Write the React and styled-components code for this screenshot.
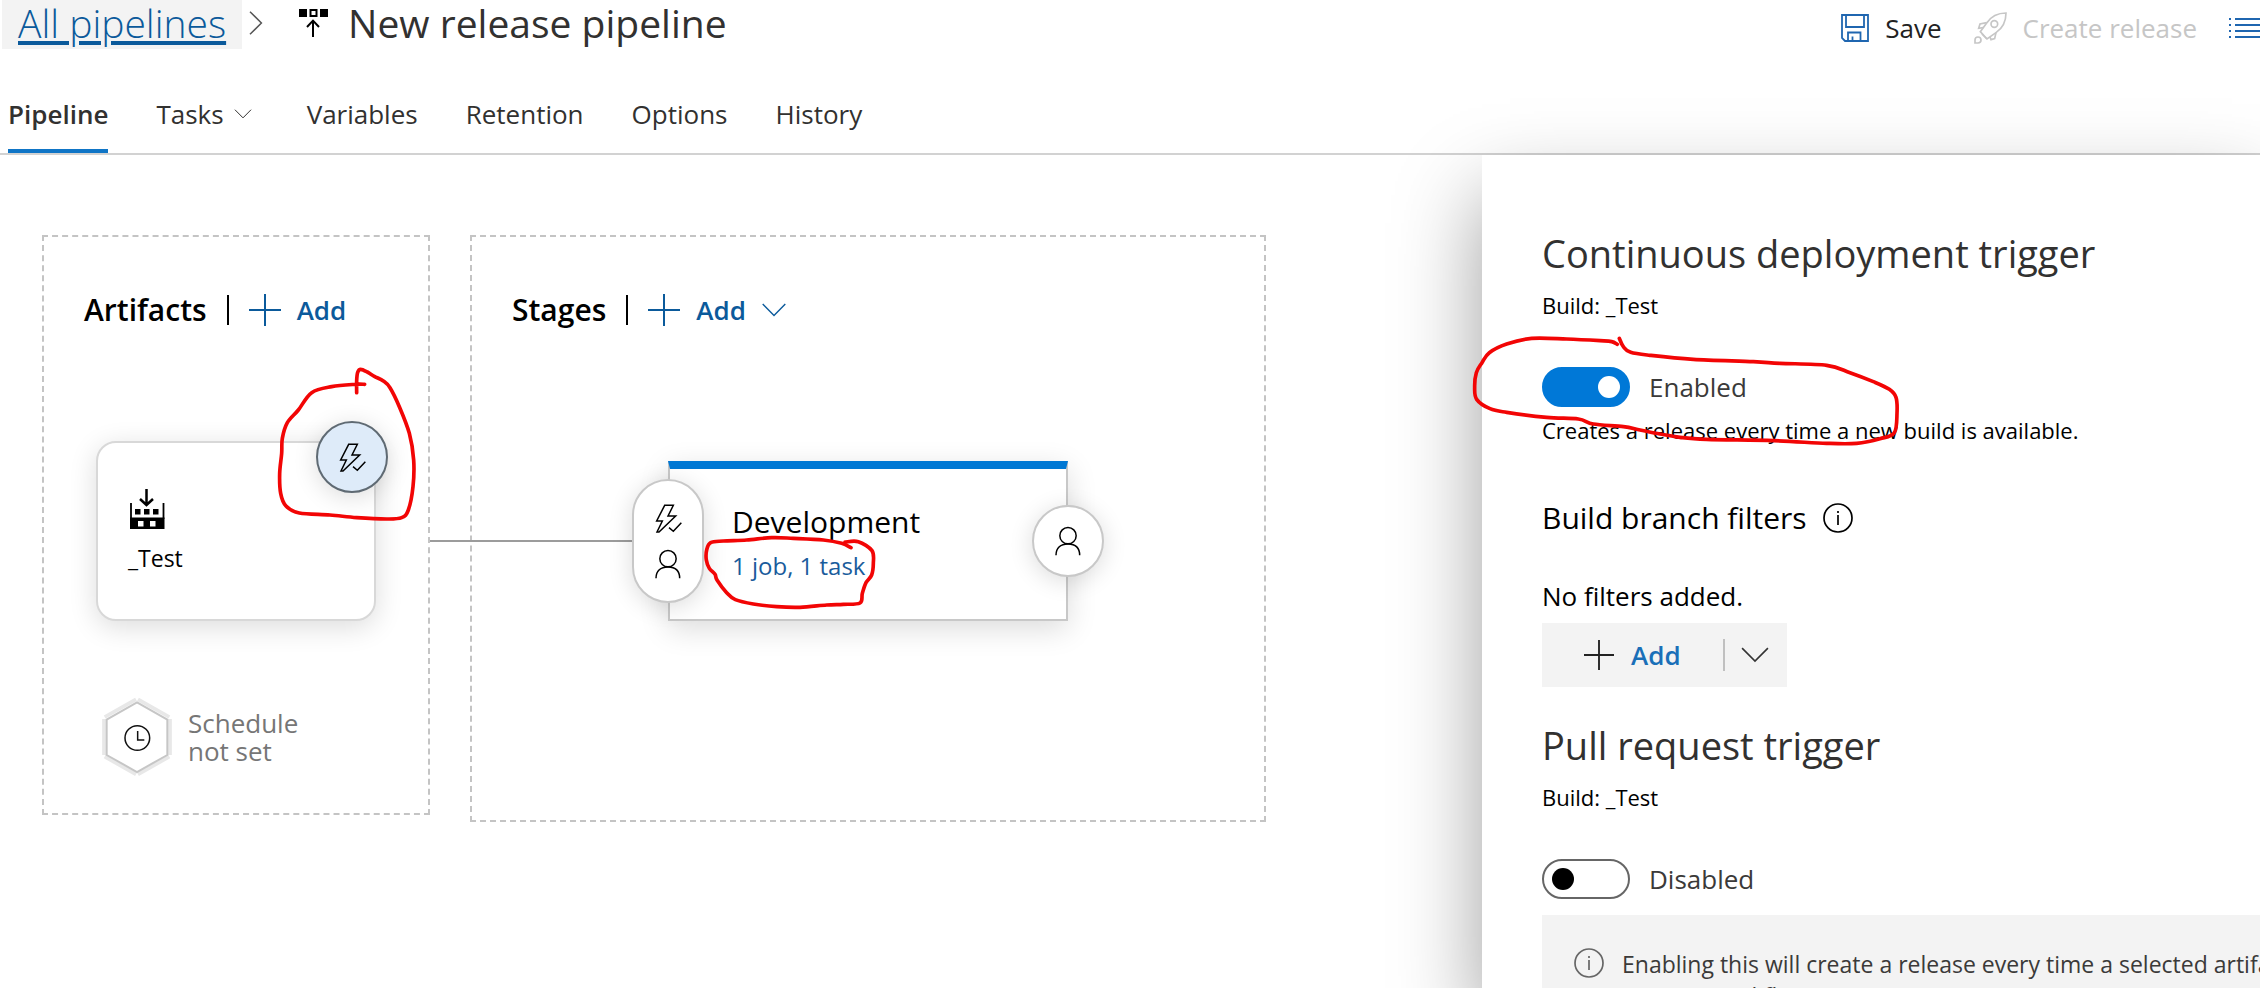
import React from "react";
import styled, { createGlobalStyle, css } from "styled-components";

const GlobalStyle = createGlobalStyle`
  *, *::before, *::after { box-sizing: border-box; }
  body {
    margin: 0;
    background: #fff;
    color: #000;
    font-family: "Open Sans", "Noto Sans", sans-serif;
    font-size: 26px;
  }
  button { font: inherit; border: 0; padding: 0; background: none; cursor: pointer; }
  h1, h2, h3, p { margin: 0; font-weight: 400; }
  svg { display: block; flex: none; }
`;

const LINK = "#0b5a9b";

/* ---------- icons ---------- */

const Stroke = styled.svg`
  fill: none;
  stroke: currentColor;
`;

const PlusIcon = ({ size = 32 }) => (
  <Stroke width={size} height={size} viewBox="0 0 32 32" strokeWidth="2">
    <path d="M16 0v32M0 16h32" />
  </Stroke>
);

const ChevronDown = ({ width = 24, height = 14 }) => (
  <Stroke width={width} height={height} viewBox="0 0 24 14" strokeWidth="1.4">
    <path d="M.7 1L12 12.4 23.3 1" />
  </Stroke>
);

const ChevronRight = () => (
  <Stroke width="14" height="24" viewBox="0 0 14 24" strokeWidth="1.5">
    <path d="M1 .7L12.4 12 1 23.3" />
  </Stroke>
);

const ReleaseIcon = () => (
  <Stroke width="29" height="28" viewBox="0 0 29 28" strokeWidth="2">
    <path fill="currentColor" stroke="none" d="M0 0h8v8H0zM21 0h8v8h-8z" />
    <path d="M11.5 1h6v6h-6zM14 28V12M8 18l6-6.400 6 6.400" />
  </Stroke>
);

const SaveIcon = () => (
  <Stroke width="28" height="28" viewBox="0 0 28 28" strokeWidth="1.8">
    <path d="M1 1h26v26H4l-3-3zM5 1v12h18V1M7 27v-8.500h12.500V27M11.500 27v-4.500" />
  </Stroke>
);

const RocketIcon = () => (
  <Stroke width="33" height="32" viewBox="0 0 99 96" strokeWidth="5">
    <path d="M96 3C72 3 52 12 38 33L19 59l20 22 27-19C88 47 96 27 96 3z" />
    <path d="M38 32L18 36l-4 13 14-2M66 62l-4 18-11 3-3-8M24 66l14 14" />
    <circle cx="61" cy="36" r="10" />
    <path d="M3 93V84a9 9 0 1 1 9 9z" />
  </Stroke>
);

const ListIcon = () => (
  <Stroke width="31" height="20" viewBox="0 0 31 20" strokeWidth="2">
    <path d="M0 1h2M0 7h2M0 13h2M0 19h2M6 1h25M6 7h25M6 13h25M6 19h25" />
  </Stroke>
);

const BoltCheckIcon = () => (
  <Stroke width="28" height="29" viewBox="922 667 84 87" strokeWidth="4.500">
    <path d="M954 671l-24 47h17l-16 33h6l50-48h-23l16-32z" />
    <path d="M967 738l13 11 24-26" />
  </Stroke>
);

const PersonIcon = () => (
  <Stroke width="28" height="30" viewBox="583 987 84 90" strokeWidth="4.500">
    <circle cx="625" cy="1016" r="24.500" />
    <path d="M589 1075c0-22 14-34 36-34s35 12 35 34" />
  </Stroke>
);

const FactoryIcon = () => (
  <Stroke width="37" height="40" viewBox="0 0 37 40" strokeWidth="2.500">
    <path d="M18.500 0v15M12 10l6.500 6 6.500-6" />
    <path d="M3 14v16M35.500 14v16" strokeWidth="1.800" />
    <path
      fill="currentColor"
      fillRule="evenodd"
      stroke="none"
      d="M7 20h5.500v5.500H7zM16 20h5.500v5.500H16zM25 20h5.500v5.500H25zM2 28.500h34.500V40H2zM10 32v5.500h5.500V32zM22 32v5.500h5.500V32z"
    />
  </Stroke>
);

const InfoIcon = () => (
  <Stroke width="30" height="30" viewBox="0 0 30 30" strokeWidth="1.700">
    <circle cx="15" cy="15" r="14" />
    <path d="M15 12v10M15 8v2" />
  </Stroke>
);

const ScheduleIcon = () => (
  <Stroke width="70" height="79" viewBox="216 291 210 237">
    <path
      stroke="#e8e8e8"
      strokeWidth="11"
      d="M222 357v108M420 357v108M224 351l94-53M324 298l94 53M224 470l94 53M324 523l94-53"
    />
    <path stroke="#c6c6c6" strokeWidth="6" d="M321 307l91 52v106l-91 51-91-51V359z" />
    <circle cx="322" cy="414" r="37" stroke="#111" strokeWidth="4.500" />
    <path d="M323 393v27h20" stroke="#111" strokeWidth="4.500" />
  </Stroke>
);

/* ---------- freehand ink marks ---------- */

const Ink = styled.svg`
  position: absolute;
  z-index: 3;
  fill: none;
  stroke: #f20505;
  stroke-width: 11;
  stroke-linecap: round;
  stroke-linejoin: round;
  pointer-events: none;
`;

/* Turns a list of pen points into a smooth Catmull-Rom curve. */
function smooth(points) {
  let d = `M${points[0].join(" ")}`;
  for (let i = 0; i < points.length - 1; i += 1) {
    const a = points[i - 1] || points[i];
    const b = points[i];
    const c = points[i + 1];
    const e = points[i + 2] || c;
    d += `C${b[0] + (c[0] - a[0]) / 6} ${b[1] + (c[1] - a[1]) / 6} ${c[0] - (e[0] - b[0]) / 6} ${c[1] - (e[1] - b[1]) / 6} ${c[0]} ${c[1]}`;
  }
  return d;
}

const ARTIFACT_INK = [
  [1004, 493], [975, 493], [905, 500], [845, 518], [805, 570], [772, 608], [757, 655], [755, 700],
  [749, 760], [752, 820], [768, 858], [808, 879], [900, 885], [980, 893], [1070, 897], [1115, 893],
  [1135, 870], [1149, 800], [1151, 720], [1138, 640], [1108, 560], [1080, 503], [1060, 483],
  [1033, 469], [1012, 456], [992, 448], [983, 457], [980, 482], [980, 518],
];

const TASKS_INK = [
  [1173, 983], [1145, 970], [1090, 960], [1000, 955], [935, 953], [860, 960], [790, 963], [752, 968],
  [740, 990], [739, 1020], [748, 1045], [765, 1063], [771, 1080], [800, 1118], [826, 1139],
  [880, 1152], [950, 1160], [1020, 1162], [1100, 1155], [1150, 1153], [1200, 1149], [1207, 1120],
  [1218, 1088], [1235, 1065], [1240, 1030], [1236, 992], [1195, 965], [1155, 966],
];

const TRIGGER_INK = [
  [772, 583], [755, 575], [720, 572], [620, 567], [515, 565], [440, 582], [388, 608], [366, 638],
  [349, 668], [344, 710], [350, 748], [390, 776], [440, 787], [560, 802], [655, 807], [700, 822],
  [790, 830], [840, 840], [900, 852], [960, 862], [1040, 868], [1240, 872], [1400, 880], [1490, 880],
  [1560, 866], [1603, 848], [1611, 790], [1608, 742], [1588, 718], [1540, 695], [1470, 668],
  [1400, 646], [1260, 640], [1180, 635], [1000, 628], [870, 616], [812, 607], [790, 590], [778, 565],
];

const ArtifactInk = styled(Ink)`
  left: 178px;
  top: -79px;
`;

const TasksInk = styled(Ink)`
  left: 34px;
  top: 66px;
`;

const TriggerInk = styled(Ink)`
  left: -10px;
  top: 179px;
`;

/* ---------- page and header ---------- */

const Page = styled.div`
  display: flex;
  flex-direction: column;
  height: 100vh;
  overflow: hidden;
`;

const Header = styled.header`
  border-bottom: 2px solid #d2d2d2;
`;

const TitleRow = styled.div`
  display: flex;
  justify-content: space-between;
  align-items: flex-start;
  height: 56px;
  padding-left: 2px;
  white-space: nowrap;
`;

const Breadcrumb = styled.nav`
  display: flex;
  align-items: flex-start;
  font-size: 39px;
  line-height: 46px;
`;

const CrumbLink = styled.a`
  padding: 0 16px 3px;
  background: #f3f3f3;
  color: ${LINK};
  font-weight: 300;
  text-decoration: underline;
  text-decoration-thickness: 4px;
  text-underline-offset: 3px;
`;

const CrumbIcon = styled.span`
  display: flex;
  align-items: center;
  height: 46px;
  margin-left: ${(p) => p.$gap}px;
  color: ${(p) => p.$color};
`;

const Title = styled.h1`
  margin-left: 20px;
  color: #323130;
  font-size: 39px;
`;

const Actions = styled.div`
  display: flex;
  align-items: center;
  gap: 32px;
  height: 56px;
`;

const ActionButton = styled.button`
  display: flex;
  align-items: center;
  gap: 16px;
  color: #222;

  svg { color: #1f66b0; }

  &:disabled {
    color: #c6c6c6;
    cursor: default;
  }
  &:disabled svg { color: #c6c6c6; }
`;

const Tabs = styled.nav`
  display: flex;
  gap: 48px;
  margin-top: 19px;
  padding-left: 8px;
`;

const Tab = styled.a`
  display: flex;
  align-items: center;
  gap: 10px;
  padding: 22px ${(p) => (p.$menu ? "7px" : "0")} 18px 0;
  border-bottom: 4px solid ${(p) => (p.$active ? "#0f75c6" : "transparent")};
  color: #323130;
  font-weight: ${(p) => (p.$active ? 600 : 400)};
  line-height: 34px;
  text-decoration: none;
`;

const Main = styled.main`
  display: flex;
  flex: 1;
  min-height: 0;
`;

/* ---------- canvas ---------- */

const Canvas = styled.section`
  display: flex;
  flex: 1;
  align-items: flex-start;
  gap: 40px;
  min-width: 0;
  padding: 80px 0 0 42px;
`;

const Lane = styled.section`
  flex: 0 0 ${(p) => p.$width}px;
  padding: 57px 40px ${(p) => p.$bottom}px;
  border: 2px dashed #c4c4c4;
`;

const LaneHeader = styled.div`
  display: flex;
  align-items: center;
  gap: 20px;
  height: 32px;
  white-space: nowrap;
`;

const LaneTitle = styled.h2`
  font-size: 30px;
  font-weight: 600;
  line-height: 32px;
`;

const Divider = styled.span`
  width: 2px;
  height: ${(p) => p.$height}px;
  background: ${(p) => p.$color};
`;

const AddButton = styled.button`
  display: flex;
  align-items: center;
  gap: 16px;
  color: ${LINK};
  font-weight: 600;
  line-height: 32px;
`;

const badge = css`
  position: absolute;
  z-index: 2;
  display: flex;
  flex-direction: column;
  align-items: center;
  justify-content: center;
  width: 72px;
  border: 2px solid #c8c8c8;
  border-radius: 36px;
  background: #fff;
  color: #000;
  box-shadow: 0 4px 24px rgba(0, 0, 0, 0.14);
`;

const ArtifactCard = styled.article`
  position: relative;
  width: 280px;
  height: 180px;
  margin: 115px 0 0 12px;
  padding: 46px 30px 0;
  border: 2px solid #d8d8d8;
  border-radius: 20px;
  background: #fff;
  box-shadow: 0 6px 28px rgba(0, 0, 0, 0.14);
`;

const ArtifactName = styled.h3`
  margin-top: 13px;
  font-size: 23px;
  line-height: 32px;
`;

const ArtifactTrigger = styled.button`
  && {
    ${badge}
    top: -22px;
    right: -14px;
    height: 72px;
    border-color: #5f6a73;
    background: #deebf9;
  }
`;

const Schedule = styled.button`
  display: flex;
  align-items: center;
  gap: 16px;
  margin: 76px 0 0 18px;
  color: #767676;
  line-height: 28px;
  text-align: left;
`;

const ScheduleText = styled.span`
  width: 120px;
`;

const StageCard = styled.article`
  position: relative;
  width: 400px;
  height: 160px;
  margin: 135px 0 0 156px;
  padding: 33px 62px 0;
  border: 2px solid #c8c8c8;
  border-top: 8px solid #0078d4;
  background: #fff;
  box-shadow: 0 8px 28px rgba(0, 0, 0, 0.14);
`;

const StageName = styled.h3`
  font-size: 30px;
  line-height: 40px;
`;

const TasksLink = styled.a`
  display: inline-block;
  margin-top: 4px;
  color: #1a5c9c;
  font-size: 24px;
  line-height: 40px;
  text-decoration: none;
  white-space: nowrap;
`;

const Connector = styled.span`
  position: absolute;
  top: 71px;
  left: -240px;
  width: 202px;
  height: 2px;
  background: #9c9c9c;
`;

const PreConditions = styled.button`
  && {
    ${badge}
    top: 10px;
    left: -38px;
    gap: 16px;
    height: 124px;
  }
`;

const PostConditions = styled.button`
  && {
    ${badge}
    top: 36px;
    right: -38px;
    height: 72px;
  }
`;

/* ---------- trigger panel ---------- */

const Panel = styled.aside`
  position: relative;
  z-index: 4;
  flex: 0 0 778px;
  min-width: 0;
  padding: 74px 0 0 60px;
  background: #fff;
  box-shadow: 0 40px 80px rgba(0, 0, 0, 0.38);
  white-space: nowrap;
`;

const PanelTitle = styled.h2`
  margin-top: ${(p) => (p.$spaced ? "34px" : "0")};
  color: #323130;
  font-size: 38px;
  line-height: 48px;
`;

const SmallText = styled.p`
  margin-top: ${(p) => p.$gap}px;
  font-size: 22px;
  line-height: 32px;
`;

const ToggleRow = styled.label`
  display: flex;
  align-items: center;
  gap: 19px;
  width: max-content;
  margin-top: 46px;
  color: #3b3a39;
`;

const Switch = styled.input`
  appearance: none;
  display: flex;
  align-items: center;
  width: 88px;
  height: 40px;
  margin: 0;
  padding: 0 8px;
  border: 2px solid #666;
  border-radius: 20px;
  background: #fff;

  &::before {
    content: "";
    width: 22px;
    height: 22px;
    border-radius: 50%;
    background: #000;
  }

  &:checked {
    justify-content: flex-end;
    border-color: #0078d7;
    background: #0078d7;
  }
  &:checked::before { background: #fff; }
`;

const FilterTitle = styled.h3`
  display: flex;
  align-items: center;
  gap: 16px;
  margin-top: 52px;
  font-size: 30px;
  line-height: 40px;
`;

const EmptyText = styled.p`
  margin-top: 42px;
  line-height: 32px;
`;

const SplitButton = styled.div`
  display: flex;
  align-items: center;
  width: max-content;
  height: 64px;
  margin-top: 11px;
  background: #f3f3f3;
`;

const SplitAdd = styled.button`
  display: flex;
  align-items: center;
  gap: 17px;
  height: 64px;
  padding: 0 42px;
  color: #1a6fb8;
  font-weight: 600;

  svg { color: #222; }
`;

const SplitMenu = styled.button`
  display: flex;
  align-items: center;
  height: 64px;
  padding: 0 18px 0 16px;
  color: #333;
`;

const Message = styled.div`
  display: flex;
  gap: 18px;
  margin-top: 16px;
  padding: 33px 32px;
  background: #f3f3f3;
  color: #3b3a39;
  font-size: 23px;
  line-height: 32px;

  svg { color: #666; }
`;

export default function App() {
  return (
    <Page>
      <GlobalStyle />
      <Header>
        <TitleRow>
          <Breadcrumb aria-label="Breadcrumb">
            <CrumbLink href="#pipelines">All pipelines</CrumbLink>
            <CrumbIcon $gap={7} $color="#555">
              <ChevronRight />
            </CrumbIcon>
            <CrumbIcon $gap={36} $color="#000">
              <ReleaseIcon />
            </CrumbIcon>
            <Title>New release pipeline</Title>
          </Breadcrumb>
          <Actions>
            <ActionButton type="button">
              <SaveIcon />
              Save
            </ActionButton>
            <ActionButton type="button" disabled>
              <RocketIcon />
              Create release
            </ActionButton>
            <ActionButton type="button" aria-label="View releases">
              <ListIcon />
            </ActionButton>
          </Actions>
        </TitleRow>
        <Tabs aria-label="Pipeline sections">
          <Tab href="#pipeline" $active>Pipeline</Tab>
          <Tab href="#tasks" $menu>
            Tasks
            <ChevronDown width={18} height={10} />
          </Tab>
          <Tab href="#variables">Variables</Tab>
          <Tab href="#retention">Retention</Tab>
          <Tab href="#options">Options</Tab>
          <Tab href="#history">History</Tab>
        </Tabs>
      </Header>

      <Main>
        <Canvas>
          <Lane $width={388} $bottom={37}>
            <LaneHeader>
              <LaneTitle>Artifacts</LaneTitle>
              <Divider $height={30} $color="#000" />
              <AddButton type="button">
                <PlusIcon />
                Add
              </AddButton>
            </LaneHeader>
            <ArtifactCard>
              <FactoryIcon />
              <ArtifactName>_Test</ArtifactName>
              <ArtifactTrigger type="button" aria-label="Continuous deployment trigger">
                <BoltCheckIcon />
              </ArtifactTrigger>
              <ArtifactInk width="142" height="160" viewBox="738 432 426 480">
                <path d={smooth(ARTIFACT_INK)} />
              </ArtifactInk>
            </ArtifactCard>
            <Schedule type="button">
              <ScheduleIcon />
              <ScheduleText>Schedule not set</ScheduleText>
            </Schedule>
          </Lane>

          <Lane $width={796} $bottom={199}>
            <LaneHeader>
              <LaneTitle>Stages</LaneTitle>
              <Divider $height={30} $color="#000" />
              <AddButton type="button">
                <PlusIcon />
                Add
                <ChevronDown />
              </AddButton>
            </LaneHeader>
            <StageCard>
              <Connector />
              <PreConditions type="button" aria-label="Pre-deployment conditions">
                <BoltCheckIcon />
                <PersonIcon />
              </PreConditions>
              <StageName>Development</StageName>
              <TasksLink href="#tasks">1 job, 1 task</TasksLink>
              <PostConditions type="button" aria-label="Post-deployment conditions">
                <PersonIcon />
              </PostConditions>
              <TasksInk width="173" height="76" viewBox="732 945 519 228">
                <path d={smooth(TASKS_INK)} />
              </TasksInk>
            </StageCard>
          </Lane>
        </Canvas>

        <Panel>
          <PanelTitle>Continuous deployment trigger</PanelTitle>
          <SmallText $gap={12}>Build: _Test</SmallText>
          <ToggleRow>
            <Switch type="checkbox" role="switch" defaultChecked />
            Enabled
          </ToggleRow>
          <SmallText $gap={7}>Creates a release every time a new build is available.</SmallText>
          <FilterTitle>
            Build branch filters
            <InfoIcon />
          </FilterTitle>
          <EmptyText>No filters added.</EmptyText>
          <SplitButton>
            <SplitAdd type="button">
              <PlusIcon size={30} />
              Add
            </SplitAdd>
            <Divider $height={32} $color="#c0c0c0" />
            <SplitMenu type="button" aria-label="More add options">
              <ChevronDown width={28} height={16} />
            </SplitMenu>
          </SplitButton>

          <PanelTitle $spaced>Pull request trigger</PanelTitle>
          <SmallText $gap={12}>Build: _Test</SmallText>
          <ToggleRow>
            <Switch type="checkbox" role="switch" />
            Disabled
          </ToggleRow>
          <Message>
            <InfoIcon />
            <p>
              Enabling this will create a release every time a selected artifact version is available as part of a pull
              <br />
              request workflow
            </p>
          </Message>
          <TriggerInk width="429" height="114" viewBox="336 552 1287 342">
            <path d={smooth(TRIGGER_INK)} />
          </TriggerInk>
        </Panel>
      </Main>
    </Page>
  );
}
